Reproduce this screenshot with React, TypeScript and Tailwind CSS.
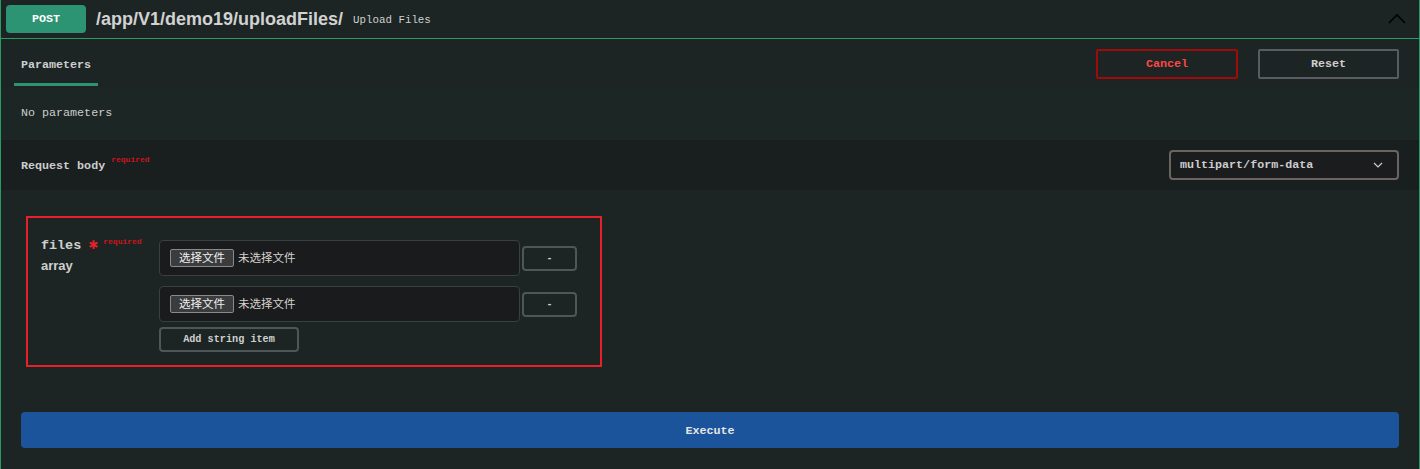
import React from "react";

const mono = "font-['Liberation_Mono','DejaVu_Sans_Mono',monospace]";

function FileRow() {
  return (
    <div className="flex items-center gap-[2px]">
      <div className="w-[361px] h-[36px] bg-[#1a1b1d] border border-[#3a3f3f] rounded-[4px] flex items-center pl-[10px] gap-[4px]">
        <span className="h-[18px] w-[64px] bg-[#3b3c3d] border border-[#8a8a8a] rounded-[2px] flex items-center justify-center text-[11.5px] text-[#f0f0f0] font-['Noto_Sans_CJK_SC',sans-serif] leading-none">
          选择文件
        </span>
        <span className="text-[11.5px] text-[#d6d2cb] font-['Noto_Sans_CJK_SC',sans-serif] leading-none">
          未选择文件
        </span>
      </div>
      <button className={`w-[55px] h-[25px] border-2 border-[#4f5656] rounded-[4px] text-[#cfcfcf] text-[10px] font-bold flex items-center justify-center ${mono}`}>
        -
      </button>
    </div>
  );
}

export default function App() {
  return (
    <div className={`w-[1420px] h-[469px] bg-[#1c2523] border-x border-[#2a9a67] overflow-hidden ${mono}`}>
      {/* header */}
      <div className="h-[39px] border-b border-[#2a9a67] flex items-center pl-[5px] pr-[12px]">
        <div className="w-[80px] h-[28px] bg-[#2d9473] rounded-[4px] flex items-center justify-center pt-[2px] text-white text-[11.7px] font-bold">
          POST
        </div>
        <span className="ml-[10px] text-[18px] font-bold text-[#d2d2d2] font-['Liberation_Sans',Arial,sans-serif]">
          /app/V1/demo19/uploadFiles/
        </span>
        <span className="ml-[10px] pt-[2px] text-[10.8px] text-[#cfcfcf]">Upload Files</span>
        <div className="flex-1" />
        <svg width="20" height="12" viewBox="0 0 20 12">
          <path d="M2 10 L10 2 L18 10" fill="none" stroke="#000" strokeWidth="1.6" />
        </svg>
      </div>
      {/* tabs */}
      <div className="h-[50px] flex items-stretch justify-between pl-[13px] pr-[20px]">
        <div className="relative flex items-center px-[7px] pt-[3px]">
          <span className="text-[11.7px] font-bold text-[#cfcfcf]">Parameters</span>
          <div className="absolute left-0 right-0 bottom-[3px] h-[3px] bg-[#2d9473]" />
        </div>
        <div className="flex items-center gap-[20px]">
          <button className="w-[142px] h-[30px] pt-[2px] border-2 border-[#a00a0a] rounded-[2px] text-[#ff4747] text-[11.7px] font-bold">
            Cancel
          </button>
          <button className="w-[141px] h-[30px] pt-[2px] border-2 border-[#5a5d5f] rounded-[2px] text-[#cfcfcf] text-[11.7px] font-bold">
            Reset
          </button>
        </div>
      </div>
      {/* no params */}
      <div className="h-[51px] flex items-center pl-[20px] pb-[2px] bg-[#1c2624]">
        <span className="text-[11.7px] text-[#cdcdcd]">No parameters</span>
      </div>
      {/* request body band */}
      <div className="h-[50px] flex items-center justify-between pl-[20px] pr-[20px] bg-[#191e1f]">
        <div className="flex items-start pt-[3px]">
          <span className="text-[11.7px] font-bold text-[#cdcdcd]">Request body</span>
          <span className="ml-[6px] -mt-[4px] text-[8px] font-bold text-[#c8161c]">required</span>
        </div>
        <div className="w-[230px] h-[30px] pt-[2px] border-2 border-[#6a665f] rounded-[4px] bg-[#1b1c1e] flex items-center justify-between pl-[9px] pr-[14px]">
          <span className="text-[11.7px] font-bold text-[#cdcdcd]">multipart/form-data</span>
          <svg width="10" height="6" viewBox="0 0 10 6" className="-mt-[2px]">
            <path d="M1 1 L5 5 L9 1" fill="none" stroke="#cdcdcd" strokeWidth="1.2" />
          </svg>
        </div>
      </div>
      {/* body */}
      <div className="pl-[25px] pt-[26px] pr-[20px]">
        <div className="w-[576px] h-[151px] border-2 border-[#e8202a] flex pl-[13px] pt-[19px]">
          <div className="w-[118px] flex flex-col">
            <div className="flex items-start">
              <span className="text-[13.4px] font-bold text-[#cfcfcf] leading-[18px]">files</span>
              <span className="ml-[7px] mt-[1px] text-[#e8202a] text-[12px] font-bold leading-[14px] font-['DejaVu_Sans',sans-serif]">✱</span>
              <span className="ml-[5px] text-[8px] font-bold text-[#c8161c] leading-[10px]">required</span>
            </div>
            <span className="mt-[3px] text-[13px] font-bold text-[#cfcfcf] leading-[16px] font-['Liberation_Sans',Arial,sans-serif]">array</span>
          </div>
          <div className="flex flex-col gap-[10px] pt-[3px]">
            <FileRow />
            <div className="flex flex-col gap-[5px]">
              <FileRow />
              <button className="w-[140px] h-[25px] pt-[1px] border-2 border-[#4f5656] rounded-[4px] text-[#cfcfcf] text-[10.2px] font-bold">
                Add string item
              </button>
            </div>
          </div>
        </div>
        <button className="mt-[45px] -ml-[5px] w-[1378px] h-[36px] pt-[3px] bg-[#1b549a] rounded-[4px] text-[#e6e6e6] text-[11.7px] font-bold">
          Execute
        </button>
      </div>
    </div>
  );
}
